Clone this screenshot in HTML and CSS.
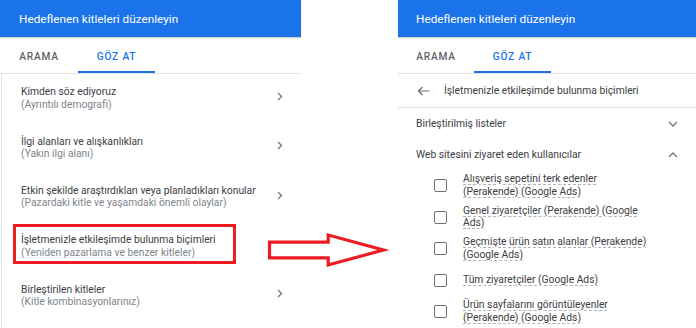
FILE: index.html
```html
<!DOCTYPE html>
<html lang="tr">
<head>
<meta charset="utf-8">
<title>Hedeflenen kitleleri düzenleyin</title>
<link rel="stylesheet" href="styles.css">
</head>
<body>
<div class="stage">
  <section class="panel panel-left">
    <header class="head">Hedeflenen kitleleri düzenleyin</header>
    <nav class="tabs">
      <div class="tab">ARAMA</div>
      <div class="tab active">GÖZ AT</div>
    </nav>
    <div class="list">
      <div class="row">
        <div class="row-text"><div class="t">Kimden söz ediyoruz</div><div class="s">(Ayrıntılı demografi)</div></div>
        <svg class="chev" width="6" height="9" viewBox="0 0 6 9"><path d="M1 1l3.5 3.5L1 8" fill="none" stroke="#7a7a7a" stroke-width="1.4"/></svg>
      </div>
      <div class="row">
        <div class="row-text"><div class="t">İlgi alanları ve alışkanlıkları</div><div class="s">(Yakın ilgi alanı)</div></div>
        <svg class="chev" width="6" height="9" viewBox="0 0 6 9"><path d="M1 1l3.5 3.5L1 8" fill="none" stroke="#7a7a7a" stroke-width="1.4"/></svg>
      </div>
      <div class="row">
        <div class="row-text"><div class="t">Etkin şekilde araştırdıkları veya planladıkları konular</div><div class="s">(Pazardaki kitle ve yaşamdaki önemli olaylar)</div></div>
        <svg class="chev" width="6" height="9" viewBox="0 0 6 9"><path d="M1 1l3.5 3.5L1 8" fill="none" stroke="#7a7a7a" stroke-width="1.4"/></svg>
      </div>
      <div class="row">
        <div class="row-text"><div class="t">İşletmenizle etkileşimde bulunma biçimleri</div><div class="s">(Yeniden pazarlama ve benzer kitleler)</div></div>
        <svg class="chev" width="6" height="9" viewBox="0 0 6 9"><path d="M1 1l3.5 3.5L1 8" fill="none" stroke="#7a7a7a" stroke-width="1.4"/></svg>
      </div>
      <div class="row">
        <div class="row-text"><div class="t">Birleştirilen kitleler</div><div class="s">(Kitle kombinasyonlarınız)</div></div>
        <svg class="chev" width="6" height="9" viewBox="0 0 6 9"><path d="M1 1l3.5 3.5L1 8" fill="none" stroke="#7a7a7a" stroke-width="1.4"/></svg>
      </div>
    </div>
  </section>

  <section class="panel panel-right">
    <header class="head">Hedeflenen kitleleri düzenleyin</header>
    <nav class="tabs">
      <div class="tab">ARAMA</div>
      <div class="tab active">GÖZ AT</div>
    </nav>
    <div class="back">
      <svg class="back-ic" width="13" height="10" viewBox="0 0 13 10"><path d="M12.5 5H1.5M5.5 1L1.5 5l4 4" fill="none" stroke="#6f6f6f" stroke-width="1.2"/></svg>
      <span>İşletmenizle etkileşimde bulunma biçimleri</span>
    </div>
    <div class="sec">
      <span>Birleştirilmiş listeler</span>
      <svg width="10" height="6" viewBox="0 0 10 6"><path d="M1 1l4 4 4-4" fill="none" stroke="#7a7a7a" stroke-width="1.4"/></svg>
    </div>
    <div class="sec">
      <span>Web sitesini ziyaret eden kullanıcılar</span>
      <svg width="10" height="6" viewBox="0 0 10 6"><path d="M1 5l4-4 4 4" fill="none" stroke="#7a7a7a" stroke-width="1.4"/></svg>
    </div>
    <div class="checks">
      <div class="chk"><span class="box"></span><span class="lbl"><span class="u">Alışveriş sepetini terk edenler</span><br><span class="u">(Perakende) (Google Ads)</span></span></div>
      <div class="chk"><span class="box"></span><span class="lbl"><span class="u">Genel ziyaretçiler (Perakende) (Google</span><br><span class="u">Ads)</span></span></div>
      <div class="chk"><span class="box"></span><span class="lbl"><span class="u">Geçmişte ürün satın alanlar (Perakende)</span><br><span class="u">(Google Ads)</span></span></div>
      <div class="chk"><span class="box"></span><span class="lbl"><span class="u">Tüm ziyaretçiler (Google Ads)</span></span></div>
      <div class="chk"><span class="box"></span><span class="lbl"><span class="u">Ürün sayfalarını görüntüleyenler</span><br><span class="u">(Perakende) (Google Ads)</span></span></div>
    </div>
  </section>

  <div class="highlight"></div>
  <svg class="arrow" width="696" height="328" viewBox="0 0 696 328">
    <polygon points="269.5,242.2 328.2,242.2 328.2,235 383.5,250 328.2,265 328.2,257.8 269.5,257.8" fill="#fff" stroke="#ed1c24" stroke-width="3.2" stroke-linejoin="miter"/>
  </svg>
</div>
</body>
</html>
```
FILE: styles.css
```css
* { box-sizing: border-box; }
html, body { margin: 0; padding: 0; background: #fff; }
body {
  font-family: Roboto, "Liberation Sans", Arial, sans-serif;
  color: #3c4043;
}
.stage {
  position: relative;
  width: 696px;
  height: 328px;
  overflow: hidden;
  display: flex;
  gap: 97px;
}
.panel {
  flex: none;
  height: 328px;
  display: flex;
  flex-direction: column;
}
.panel-left { width: 301px; }
.panel-right { width: 298px; }

.head {
  height: 37px;
  flex: none;
  background: #1a73e8;
  color: #fff;
  font-size: 11.8px;
  display: flex;
  align-items: center;
  padding-left: 19px;
  box-shadow: 0 1px 1px rgba(0,0,0,0.18);
  position: relative;
  z-index: 1;
}
.panel-right .head { padding-left: 18px; }

.tabs {
  height: 37px;
  flex: none;
  display: flex;
  border-bottom: 1px solid #e3e3e3;
}
.tab {
  width: 77px;
  display: flex;
  align-items: center;
  justify-content: center;
  padding-top: 4px;
  font-size: 10.2px;
  font-weight: 500;
  letter-spacing: 0.8px;
  color: #5f6368;
  border-bottom: 2px solid transparent;
}
.panel-left .tab:first-child { width: 78px; }
.panel-right .tab:first-child { width: 76px; }
.tab.active {
  color: #1a73e8;
  border-bottom-color: #1a73e8;
}

.panel-left .list {
  flex: 1;
  border-left: 1px solid #e6e6e6;
  margin-left: 1px;
}
.row {
  height: 49.3px;
  display: flex;
  align-items: center;
  justify-content: space-between;
  padding: 0 18px 0 19px;
}
.row-text { font-size: 10.3px; line-height: 12.3px; }
.row-text .t { color: #3c4043; }
.row-text .s { color: #80868b; }
.chev { margin-bottom: 4px; }

.back {
  height: 34px;
  flex: none;
  display: flex;
  align-items: center;
  padding-left: 19px;
  border-bottom: 1px solid #e3e3e3;
  font-size: 10.3px;
  color: #3c4043;
}
.back-ic { margin-right: 14px; }

.sec {
  height: 31px;
  flex: none;
  display: flex;
  align-items: center;
  justify-content: space-between;
  padding: 0 18px 0 18px;
  font-size: 10.3px;
  color: #3c4043;
}

.checks { padding-top: 0; }
.chk {
  height: 31.5px;
  display: flex;
  align-items: center;
  padding-left: 36px;
}
.box {
  flex: none;
  width: 13px;
  height: 13px;
  border: 1.6px solid #707070;
  border-radius: 2px;
  margin-right: 16px;
}
.lbl {
  font-size: 10.3px;
  line-height: 12.6px;
  color: #3c4043;
}
.u {
  text-decoration: underline dashed #b0b4b8;
  text-decoration-thickness: 1px;
  text-underline-offset: 2px;
}

.highlight {
  position: absolute;
  left: 13px;
  top: 224px;
  width: 223px;
  height: 40px;
  border: 3px solid #ed1c24;
}
.arrow {
  position: absolute;
  left: 0;
  top: 0;
  pointer-events: none;
}
```
